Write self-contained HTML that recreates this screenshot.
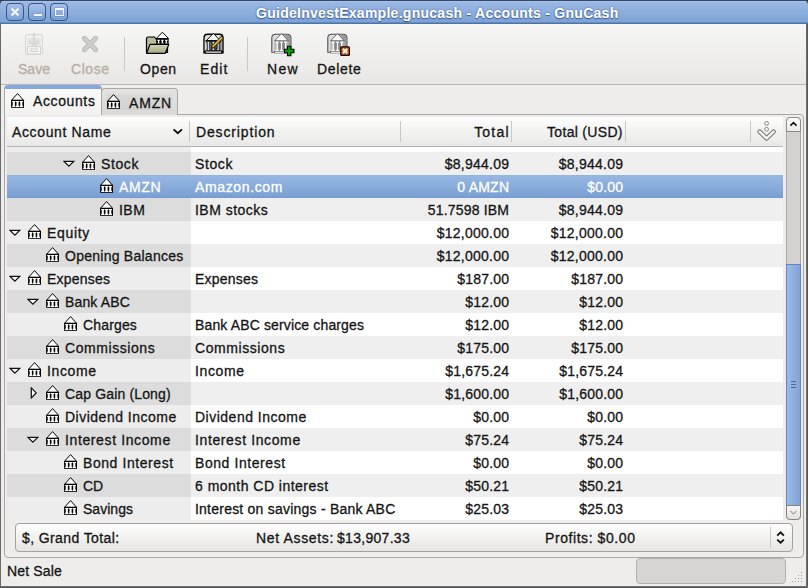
<!DOCTYPE html>
<html><head><meta charset="utf-8"><style>
*{margin:0;padding:0;box-sizing:border-box}
html,body{width:808px;height:588px;overflow:hidden}
body{position:relative;background:#eeedeb;font-family:"Liberation Sans",sans-serif;font-size:14px;color:#151515;-webkit-text-stroke:0.3px currentColor}
div,svg,span{position:absolute}
#title{left:0;top:0;width:808px;height:24px;border-radius:5px 5px 0 0;
 background:linear-gradient(#34496a 0,#34496a 1px,#b4ccee 1px,#9bb9e4 2px,#7ea3d6 22px,#4d74a8 23px,#4d74a8 24px)}
#title .tt{color:#fff;font-weight:bold;font-size:14px;line-height:18px;white-space:nowrap;-webkit-text-stroke:0.1px #fff;
 text-shadow:0 0 2px #3d5f95,0 1px 1px #3d5f95}
.wb{width:18px;height:18px;top:3px;border:1px solid #3b5584;border-radius:4px;background:linear-gradient(#a4c0e8,#7aa0d5)}
#frameL{left:0;top:24px;width:1px;height:564px;background:#6a6a6a}
#frameR{right:0;top:24px;width:2px;height:564px;background:linear-gradient(90deg,#7a7a7a,#4e4e4e)}
#frameB{left:0;bottom:0;width:808px;height:2px;background:linear-gradient(#7a7a7a,#4a4a4a)}
#toolbar{left:1px;top:24px;width:805px;height:61px;background:linear-gradient(#f6f6f5,#e8e7e5);border-bottom:1px solid #b9b8b6}
.tl{font-size:14px;line-height:18px;color:#151515;white-space:nowrap}
.tl.dis{color:#b7ada3}
.sep{width:1px;background:#c9c8c6;top:37px;height:34px}
#nb{left:4px;top:114px;width:800px;height:444px;border:1px solid #a9a8a6;border-radius:0 4px 4px 4px;background:#eeedeb}
.tab{height:30px;border:1px solid #a9a8a6;border-bottom:none;border-radius:4px 4px 0 0}
#tab1{left:4px;top:85px;width:98px;height:30px;background:linear-gradient(#fafafa,#f2f1f0);border-top:4px solid #86a9da}
#tab2{left:101px;top:88px;width:77px;height:27px;background:linear-gradient(#e4e3e1,#d9d8d6)}
#hdr{left:7px;top:117px;width:776px;height:30px;background:linear-gradient(#fdfdfd,#e8e8e7);border-bottom:1px solid #b3b3b3}
.hs{top:4px;width:1px;height:21px;background:#c8c8c8}
.ht{line-height:18px;white-space:nowrap}
.row{left:7px;width:776px;height:23px}
.row.even{background:#fff}
.row.odd{background:#efefef}
.row .c1{left:0;top:0;width:184px;height:23px}
.row.even .c1{background:#ededed}
.row.odd .c1{background:#dcdcdc}
.row.sel{background:linear-gradient(#8fb0df 0,#97b7e3 1px,#7aa0d3 22px,#6f97cf 23px)}
.t{line-height:23px;white-space:nowrap;padding-top:1px}
.tb{line-height:22px}
.t.w{color:#fff}
.bk{}
#sb{left:786px;top:117px;width:15px;height:403px;background:#d3d2d0;border:1px solid #a9a8a6;border-radius:4px}
#sbup{left:786px;top:117px;width:15px;height:15px;background:linear-gradient(#fdfdfd,#ececeb);border:1px solid #8e8d8b;border-radius:4px 4px 0 0}
#sbdn{left:786px;top:505px;width:15px;height:15px;background:linear-gradient(#f6f6f6,#e2e2e1);border:1px solid #858483;border-radius:0 0 4px 4px}
#thumb{left:786px;top:264px;width:15px;height:242px;background:linear-gradient(90deg,#9dbbe6,#7ea4d7);border:1px solid #5d86c2}
#combo{left:15px;top:523px;width:778px;height:29px;border:1px solid #a3a2a0;border-radius:4px;background:linear-gradient(#fefefe,#e6e5e3)}
#prog{left:636px;top:558px;width:150px;height:26px;border:1px solid #b2b1af;border-radius:4px;background:#d6d5d3}
</style></head><body>
<div style="left:0;top:0;width:808px;height:6px;background:#3a3a3a"></div>
<div id="title"><div class="tt" style="left:256px;top:4px;letter-spacing:0.275px">GuideInvestExample.gnucash - Accounts - GnuCash</div></div>
<div class="wb" style="left:6px"><svg style="left:3px;top:3px" width="10" height="10" viewBox="0 0 10 10"><path d="M1.5 1.5L8.5 8.5M8.5 1.5L1.5 8.5" stroke="#f4f7fc" stroke-width="2.1"/></svg></div>
<div class="wb" style="left:28px"><div style="left:4.5px;top:10px;width:8px;height:2px;background:#f4f7fc;box-shadow:0 0 1px #3b5584"></div></div>
<div class="wb" style="left:50px"><div style="left:4px;top:4px;width:8.5px;height:8px;border:1.5px solid #f4f7fc;border-top-width:2.5px;box-shadow:0 0 1px #3b5584"></div></div>
<div id="toolbar"></div>
<div class="sep" style="left:124px"></div>
<div class="sep" style="left:247px"></div>
<svg style="left:18px;top:28px" width="32" height="32" viewBox="0 0 32 32"><rect x="7.5" y="6.5" width="17" height="20" rx="2" fill="#f0f0ef" stroke="#d6d6d5" stroke-width="1"/><rect x="9.5" y="10" width="13" height="7" fill="#e4e4e3"/><rect x="9.5" y="18.5" width="13" height="7.5" fill="#f3f3f2" stroke="#d2d2d1" stroke-width="1"/><rect x="13" y="21" width="6" height="2.5" fill="none" stroke="#d2d2d1" stroke-width="1"/><path d="M16 5V17M11.5 13L16 17.5L20.5 13" stroke="#d6d9d2" stroke-width="2.4" fill="none"/></svg>
<svg style="left:74px;top:28px" width="32" height="32" viewBox="0 0 32 32"><path d="M10.3 10.3L21.7 21.7M21.7 10.3L10.3 21.7" stroke="#b9b9b9" stroke-width="5" stroke-linecap="round"/><path d="M10.3 10.3L21.7 21.7M21.7 10.3L10.3 21.7" stroke="#cdcdcd" stroke-width="3.2" stroke-linecap="round"/></svg>
<svg style="left:142px;top:28px" width="32" height="32" viewBox="0 0 32 32"><defs><linearGradient id="fo" x1="0" y1="0" x2="0" y2="1"><stop offset="0" stop-color="#d3d4b6"/><stop offset="1" stop-color="#a7a985"/></linearGradient></defs><path d="M4.5 24.5V10.5Q4.5 9 6 9H12.5L14 11H25.5V24.5Z" fill="#b9bb99" stroke="#000" stroke-width="1.2"/><path d="M20.4 4.2L14.2 10.6H26.6Z" fill="#fff" stroke="#000" stroke-width="1"/><rect x="14.2" y="10.4" width="12.4" height="6" fill="#000"/><g fill="#fff"><path d="M15.3 11.7h2.6v1h-0.7v2h0.7v0.9h-2.6v-0.9h0.7v-2h-0.7z"/><path d="M19.099999999999998 11.7h2.6v1h-0.7v2h0.7v0.9h-2.6v-0.9h0.7v-2h-0.7z"/><path d="M23.0 11.7h2.6v1h-0.7v2h0.7v0.9h-2.6v-0.9h0.7v-2h-0.7z"/></g><path d="M8 16.4H26.8L23.3 25.3H4.6Z" fill="url(#fo)" stroke="#000" stroke-width="1.2" stroke-linejoin="round"/></svg>
<svg style="left:197px;top:28px" width="32" height="32" viewBox="0 0 32 32"><defs><linearGradient id="eg" x1="0" x2="1"><stop offset="0" stop-color="#e6e6e6"/><stop offset="0.3" stop-color="#6a6a6a"/><stop offset="0.75" stop-color="#3c3c3c"/><stop offset="1" stop-color="#b8b8b8"/></linearGradient></defs><path d="M6.3 25.6V10Q6.3 5.6 10.6 5.6H22.4Q26.7 5.6 26.7 10V25.6Z" fill="#000"/><path d="M7.6 12.6V10.4Q7.6 7 10.8 7H22.2Q25.4 7 25.4 10.4V12.6Z" fill="#dcdcdc"/><rect x="7.6" y="12.6" width="17.8" height="10.2" fill="url(#eg)"/><path d="M16.3 5.4L9.4 12.6H23.2Z" fill="#fafafa" stroke="#000" stroke-width="0.9"/><rect x="8.6" y="12.5" width="15.8" height="1.2" fill="#000"/><g fill="#fff" stroke="#000" stroke-width="0.7"><path d="M9.7 13.6h3.6v1.2h-0.9v6.6h0.9v1.2h-3.6v-1.2h0.9v-6.6h-0.9z"/><path d="M14.5 13.6h3.6v1.2h-0.9v6.6h0.9v1.2h-3.6v-1.2h0.9v-6.6h-0.9z"/><path d="M19.3 13.6h3.6v1.2h-0.9v6.6h0.9v1.2h-3.6v-1.2h0.9v-6.6h-0.9z"/></g><rect x="7.6" y="22.7" width="17.8" height="2.9" fill="#000"/><rect x="8.8" y="23.5" width="15.4" height="1.2" fill="#fff"/><path d="M15.6 18.8L24.8 9.6" stroke="#222" stroke-width="3.2" stroke-linecap="round"/><path d="M16 18.4L24.6 9.8" stroke="#f0c020" stroke-width="1.7" stroke-linecap="round"/></svg>
<svg style="left:266px;top:28px" width="32" height="32" viewBox="0 0 32 32"><defs><linearGradient id="gb266" x1="0" x2="1"><stop offset="0" stop-color="#c9c9c9"/><stop offset="0.5" stop-color="#6e6e6e"/><stop offset="1" stop-color="#b5b5b5"/></linearGradient></defs><path d="M5.8 24.3V10Q5.8 6.2 9.6 6.2H21.1Q24.9 6.2 24.9 10V24.3Z" fill="#dedede" stroke="#4e4e4e" stroke-width="1.1"/><path d="M22 12.8L18 6.7H21.1Q24.4 6.7 24.4 10V24H22Z" fill="#9a9a9a"/><rect x="8" y="13" width="14.5" height="10" fill="url(#gb266)"/><path d="M15.5 5.6L8.6 12.8H22.3Z" fill="#fbfbfb" stroke="#555" stroke-width="0.9"/><g fill="#fafafa"><path d="M9.700000000000001 13.6h3.2v1.2h-0.9v7h0.9v1.2h-3.2v-1.2h0.9v-7h-0.9z"/><path d="M13.9 13.6h3.2v1.2h-0.9v7h0.9v1.2h-3.2v-1.2h0.9v-7h-0.9z"/><path d="M18.099999999999998 13.6h3.2v1.2h-0.9v7h0.9v1.2h-3.2v-1.2h0.9v-7h-0.9z"/></g><rect x="8.5" y="23.5" width="13.5" height="1.6" fill="#fff" stroke="#666" stroke-width="0.6"/><path d="M21.5 18.3h3.4v3h3v3.4h-3v3h-3.4v-3h-3v-3.4h3z" fill="#00a400" stroke="#000" stroke-width="1.1"/></svg>
<svg style="left:322px;top:28px" width="32" height="32" viewBox="0 0 32 32"><defs><linearGradient id="gb322" x1="0" x2="1"><stop offset="0" stop-color="#c9c9c9"/><stop offset="0.5" stop-color="#6e6e6e"/><stop offset="1" stop-color="#b5b5b5"/></linearGradient></defs><path d="M5.8 24.3V10Q5.8 6.2 9.6 6.2H21.1Q24.9 6.2 24.9 10V24.3Z" fill="#dedede" stroke="#4e4e4e" stroke-width="1.1"/><path d="M22 12.8L18 6.7H21.1Q24.4 6.7 24.4 10V24H22Z" fill="#9a9a9a"/><rect x="8" y="13" width="14.5" height="10" fill="url(#gb322)"/><path d="M15.5 5.6L8.6 12.8H22.3Z" fill="#fbfbfb" stroke="#555" stroke-width="0.9"/><g fill="#fafafa"><path d="M9.700000000000001 13.6h3.2v1.2h-0.9v7h0.9v1.2h-3.2v-1.2h0.9v-7h-0.9z"/><path d="M13.9 13.6h3.2v1.2h-0.9v7h0.9v1.2h-3.2v-1.2h0.9v-7h-0.9z"/><path d="M18.099999999999998 13.6h3.2v1.2h-0.9v7h0.9v1.2h-3.2v-1.2h0.9v-7h-0.9z"/></g><rect x="8.5" y="23.5" width="13.5" height="1.6" fill="#fff" stroke="#666" stroke-width="0.6"/><rect x="18.8" y="18.8" width="8.6" height="8.6" rx="1" fill="#e05a1c" stroke="#000" stroke-width="1.2"/><path d="M21 21L25.2 25.2M25.2 21L21 25.2" stroke="#fff" stroke-width="1.8"/></svg>
<div class="tl dis" style="left:18px;top:60px;letter-spacing:0.020px">Save</div>
<div class="tl dis" style="left:71px;top:60px;letter-spacing:0.541px">Close</div>
<div class="tl" style="left:140px;top:60px;letter-spacing:0.613px">Open</div>
<div class="tl" style="left:200px;top:60px;letter-spacing:1.094px">Edit</div>
<div class="tl" style="left:267px;top:60px;letter-spacing:1.328px">New</div>
<div class="tl" style="left:317px;top:60px;letter-spacing:0.672px">Delete</div>
<div id="nb"></div>
<div id="tab2" class="tab"></div>
<div id="tab1" class="tab"></div>
<svg class="bk" style="left:11px;top:92px" width="14" height="16" viewBox="0 0 14 16"><path d="M6.55 1.6L0.6 8.2H12.5Z" fill="#fff" stroke="#000" stroke-width="1" stroke-linejoin="round"/><rect x="0.1" y="8" width="12.9" height="7.8" fill="#000"/><g fill="#fff"><path d="M1.15 8.9h3.3v1.1h-0.6v3.8h0.6v1.1h-3.3v-1.1h0.6v-3.8h-0.6z"/><path d="M4.90 8.9h3.3v1.1h-0.6v3.8h0.6v1.1h-3.3v-1.1h0.6v-3.8h-0.6z"/><path d="M8.65 8.9h3.3v1.1h-0.6v3.8h0.6v1.1h-3.3v-1.1h0.6v-3.8h-0.6z"/></g></svg>
<div class="t tb" style="left:33px;top:89px;letter-spacing:0.613px">Accounts</div>
<svg class="bk" style="left:107px;top:93px" width="14" height="16" viewBox="0 0 14 16"><path d="M6.55 1.6L0.6 8.2H12.5Z" fill="#fff" stroke="#000" stroke-width="1" stroke-linejoin="round"/><rect x="0.1" y="8" width="12.9" height="7.8" fill="#000"/><g fill="#fff"><path d="M1.15 8.9h3.3v1.1h-0.6v3.8h0.6v1.1h-3.3v-1.1h0.6v-3.8h-0.6z"/><path d="M4.90 8.9h3.3v1.1h-0.6v3.8h0.6v1.1h-3.3v-1.1h0.6v-3.8h-0.6z"/><path d="M8.65 8.9h3.3v1.1h-0.6v3.8h0.6v1.1h-3.3v-1.1h0.6v-3.8h-0.6z"/></g></svg>
<div style="left:106px;top:94px;width:66px;height:16px;background:rgba(0,0,0,0.035)"></div><div class="t tb" style="left:129px;top:91px;letter-spacing:0.832px">AMZN</div>
<div id="hdr">
 <div class="ht" style="left:5px;top:6px;letter-spacing:0.639px">Account Name</div>
 <svg style="left:165px;top:10px" width="12" height="8" viewBox="0 0 12 8"><path d="M1.6 2.4L5.8 6.3L10 2.4" stroke="#111" stroke-width="1.9" fill="none"/></svg>
 <div class="hs" style="left:182px"></div>
 <div class="ht" style="left:189px;top:6px;letter-spacing:0.861px">Description</div>
 <div class="hs" style="left:392.5px"></div>
 <div class="ht" style="right:273.32px;top:6px;letter-spacing:1.184px">Total</div>
 <div class="hs" style="left:504px"></div>
 <div class="ht" style="right:160.19px;top:6px;letter-spacing:0.313px">Total (USD)</div>
 <div class="hs" style="left:618px"></div>
 <div class="hs" style="left:743px"></div>
</div>
<div class="row even" style="top:147px;height:5px"><div class="c1" style="height:5px"></div></div>
<div class="row odd" style="top:152px"><div class="c1"></div></div>
<svg class="ex" style="left:62.5px;top:159.5px" width="12" height="8" viewBox="0 0 12 8"><path d="M0.9 1.3H10.9L5.9 6.2Z" fill="#fff" stroke="#111" stroke-width="1.25" stroke-linejoin="miter"/></svg>
<svg class="bk" style="left:82px;top:154px" width="14" height="16" viewBox="0 0 14 16"><path d="M6.55 1.6L0.6 8.2H12.5Z" fill="#fff" stroke="#000" stroke-width="1" stroke-linejoin="round"/><rect x="0.1" y="8" width="12.9" height="7.8" fill="#000"/><g fill="#fff"><path d="M1.15 8.9h3.3v1.1h-0.6v3.8h0.6v1.1h-3.3v-1.1h0.6v-3.8h-0.6z"/><path d="M4.90 8.9h3.3v1.1h-0.6v3.8h0.6v1.1h-3.3v-1.1h0.6v-3.8h-0.6z"/><path d="M8.65 8.9h3.3v1.1h-0.6v3.8h0.6v1.1h-3.3v-1.1h0.6v-3.8h-0.6z"/></g></svg>
<div class="t" style="left:101px;top:152px;letter-spacing:0.597px">Stock</div>
<div class="t" style="left:195px;top:152px;letter-spacing:0.597px">Stock</div>
<div class="t r" style="right:298.76px;top:152px;letter-spacing:0.245px">$8,944.09</div>
<div class="t r" style="right:184.76px;top:152px;letter-spacing:0.245px">$8,944.09</div>
<div class="row sel" style="top:175px"></div>
<svg class="bk" style="left:100px;top:177px" width="14" height="16" viewBox="0 0 14 16"><path d="M6.55 1.6L0.6 8.2H12.5Z" fill="#fff" stroke="#000" stroke-width="1" stroke-linejoin="round"/><rect x="0.1" y="8" width="12.9" height="7.8" fill="#000"/><g fill="#fff"><path d="M1.15 8.9h3.3v1.1h-0.6v3.8h0.6v1.1h-3.3v-1.1h0.6v-3.8h-0.6z"/><path d="M4.90 8.9h3.3v1.1h-0.6v3.8h0.6v1.1h-3.3v-1.1h0.6v-3.8h-0.6z"/><path d="M8.65 8.9h3.3v1.1h-0.6v3.8h0.6v1.1h-3.3v-1.1h0.6v-3.8h-0.6z"/></g></svg>
<div class="t w" style="left:119px;top:175px;letter-spacing:0.657px">AMZN</div>
<div class="t w" style="left:195px;top:175px;letter-spacing:0.640px">Amazon.com</div>
<div class="t r w" style="right:298.76px;top:175px;letter-spacing:0.237px">0 AMZN</div>
<div class="t r w" style="right:184.81px;top:175px;letter-spacing:0.191px">$0.00</div>
<div class="row odd" style="top:198px"><div class="c1"></div></div>
<svg class="bk" style="left:100px;top:200px" width="14" height="16" viewBox="0 0 14 16"><path d="M6.55 1.6L0.6 8.2H12.5Z" fill="#fff" stroke="#000" stroke-width="1" stroke-linejoin="round"/><rect x="0.1" y="8" width="12.9" height="7.8" fill="#000"/><g fill="#fff"><path d="M1.15 8.9h3.3v1.1h-0.6v3.8h0.6v1.1h-3.3v-1.1h0.6v-3.8h-0.6z"/><path d="M4.90 8.9h3.3v1.1h-0.6v3.8h0.6v1.1h-3.3v-1.1h0.6v-3.8h-0.6z"/><path d="M8.65 8.9h3.3v1.1h-0.6v3.8h0.6v1.1h-3.3v-1.1h0.6v-3.8h-0.6z"/></g></svg>
<div class="t" style="left:119px;top:198px;letter-spacing:0.470px">IBM</div>
<div class="t" style="left:195px;top:198px;letter-spacing:0.483px">IBM stocks</div>
<div class="t r" style="right:298.81px;top:198px;letter-spacing:0.192px">51.7598 IBM</div>
<div class="t r" style="right:184.76px;top:198px;letter-spacing:0.245px">$8,944.09</div>
<div class="row even" style="top:221px"><div class="c1"></div></div>
<svg class="ex" style="left:8.5px;top:228.5px" width="12" height="8" viewBox="0 0 12 8"><path d="M0.9 1.3H10.9L5.9 6.2Z" fill="#fff" stroke="#111" stroke-width="1.25" stroke-linejoin="miter"/></svg>
<svg class="bk" style="left:28px;top:223px" width="14" height="16" viewBox="0 0 14 16"><path d="M6.55 1.6L0.6 8.2H12.5Z" fill="#fff" stroke="#000" stroke-width="1" stroke-linejoin="round"/><rect x="0.1" y="8" width="12.9" height="7.8" fill="#000"/><g fill="#fff"><path d="M1.15 8.9h3.3v1.1h-0.6v3.8h0.6v1.1h-3.3v-1.1h0.6v-3.8h-0.6z"/><path d="M4.90 8.9h3.3v1.1h-0.6v3.8h0.6v1.1h-3.3v-1.1h0.6v-3.8h-0.6z"/><path d="M8.65 8.9h3.3v1.1h-0.6v3.8h0.6v1.1h-3.3v-1.1h0.6v-3.8h-0.6z"/></g></svg>
<div class="t" style="left:47px;top:221px;letter-spacing:0.663px">Equity</div>
<div class="t r" style="right:298.76px;top:221px;letter-spacing:0.242px">$12,000.00</div>
<div class="t r" style="right:184.76px;top:221px;letter-spacing:0.242px">$12,000.00</div>
<div class="row odd" style="top:244px"><div class="c1"></div></div>
<svg class="bk" style="left:46px;top:246px" width="14" height="16" viewBox="0 0 14 16"><path d="M6.55 1.6L0.6 8.2H12.5Z" fill="#fff" stroke="#000" stroke-width="1" stroke-linejoin="round"/><rect x="0.1" y="8" width="12.9" height="7.8" fill="#000"/><g fill="#fff"><path d="M1.15 8.9h3.3v1.1h-0.6v3.8h0.6v1.1h-3.3v-1.1h0.6v-3.8h-0.6z"/><path d="M4.90 8.9h3.3v1.1h-0.6v3.8h0.6v1.1h-3.3v-1.1h0.6v-3.8h-0.6z"/><path d="M8.65 8.9h3.3v1.1h-0.6v3.8h0.6v1.1h-3.3v-1.1h0.6v-3.8h-0.6z"/></g></svg>
<div class="t" style="left:65px;top:244px;letter-spacing:0.255px">Opening Balances</div>
<div class="t r" style="right:298.76px;top:244px;letter-spacing:0.242px">$12,000.00</div>
<div class="t r" style="right:184.76px;top:244px;letter-spacing:0.242px">$12,000.00</div>
<div class="row even" style="top:267px"><div class="c1"></div></div>
<svg class="ex" style="left:8.5px;top:274.5px" width="12" height="8" viewBox="0 0 12 8"><path d="M0.9 1.3H10.9L5.9 6.2Z" fill="#fff" stroke="#111" stroke-width="1.25" stroke-linejoin="miter"/></svg>
<svg class="bk" style="left:28px;top:269px" width="14" height="16" viewBox="0 0 14 16"><path d="M6.55 1.6L0.6 8.2H12.5Z" fill="#fff" stroke="#000" stroke-width="1" stroke-linejoin="round"/><rect x="0.1" y="8" width="12.9" height="7.8" fill="#000"/><g fill="#fff"><path d="M1.15 8.9h3.3v1.1h-0.6v3.8h0.6v1.1h-3.3v-1.1h0.6v-3.8h-0.6z"/><path d="M4.90 8.9h3.3v1.1h-0.6v3.8h0.6v1.1h-3.3v-1.1h0.6v-3.8h-0.6z"/><path d="M8.65 8.9h3.3v1.1h-0.6v3.8h0.6v1.1h-3.3v-1.1h0.6v-3.8h-0.6z"/></g></svg>
<div class="t" style="left:47px;top:267px;letter-spacing:0.227px">Expenses</div>
<div class="t" style="left:195px;top:267px;letter-spacing:0.227px">Expenses</div>
<div class="t r" style="right:298.80px;top:267px;letter-spacing:0.199px">$187.00</div>
<div class="t r" style="right:184.80px;top:267px;letter-spacing:0.199px">$187.00</div>
<div class="row odd" style="top:290px"><div class="c1"></div></div>
<svg class="ex" style="left:26.5px;top:297.5px" width="12" height="8" viewBox="0 0 12 8"><path d="M0.9 1.3H10.9L5.9 6.2Z" fill="#fff" stroke="#111" stroke-width="1.25" stroke-linejoin="miter"/></svg>
<svg class="bk" style="left:46px;top:292px" width="14" height="16" viewBox="0 0 14 16"><path d="M6.55 1.6L0.6 8.2H12.5Z" fill="#fff" stroke="#000" stroke-width="1" stroke-linejoin="round"/><rect x="0.1" y="8" width="12.9" height="7.8" fill="#000"/><g fill="#fff"><path d="M1.15 8.9h3.3v1.1h-0.6v3.8h0.6v1.1h-3.3v-1.1h0.6v-3.8h-0.6z"/><path d="M4.90 8.9h3.3v1.1h-0.6v3.8h0.6v1.1h-3.3v-1.1h0.6v-3.8h-0.6z"/><path d="M8.65 8.9h3.3v1.1h-0.6v3.8h0.6v1.1h-3.3v-1.1h0.6v-3.8h-0.6z"/></g></svg>
<div class="t" style="left:65px;top:290px;letter-spacing:0.134px">Bank ABC</div>
<div class="t r" style="right:298.80px;top:290px;letter-spacing:0.195px">$12.00</div>
<div class="t r" style="right:184.80px;top:290px;letter-spacing:0.195px">$12.00</div>
<div class="row even" style="top:313px"><div class="c1"></div></div>
<svg class="bk" style="left:64px;top:315px" width="14" height="16" viewBox="0 0 14 16"><path d="M6.55 1.6L0.6 8.2H12.5Z" fill="#fff" stroke="#000" stroke-width="1" stroke-linejoin="round"/><rect x="0.1" y="8" width="12.9" height="7.8" fill="#000"/><g fill="#fff"><path d="M1.15 8.9h3.3v1.1h-0.6v3.8h0.6v1.1h-3.3v-1.1h0.6v-3.8h-0.6z"/><path d="M4.90 8.9h3.3v1.1h-0.6v3.8h0.6v1.1h-3.3v-1.1h0.6v-3.8h-0.6z"/><path d="M8.65 8.9h3.3v1.1h-0.6v3.8h0.6v1.1h-3.3v-1.1h0.6v-3.8h-0.6z"/></g></svg>
<div class="t" style="left:83px;top:313px;letter-spacing:0.154px">Charges</div>
<div class="t" style="left:195px;top:313px;letter-spacing:0.140px">Bank ABC service charges</div>
<div class="t r" style="right:298.80px;top:313px;letter-spacing:0.195px">$12.00</div>
<div class="t r" style="right:184.80px;top:313px;letter-spacing:0.195px">$12.00</div>
<div class="row odd" style="top:336px"><div class="c1"></div></div>
<svg class="bk" style="left:46px;top:338px" width="14" height="16" viewBox="0 0 14 16"><path d="M6.55 1.6L0.6 8.2H12.5Z" fill="#fff" stroke="#000" stroke-width="1" stroke-linejoin="round"/><rect x="0.1" y="8" width="12.9" height="7.8" fill="#000"/><g fill="#fff"><path d="M1.15 8.9h3.3v1.1h-0.6v3.8h0.6v1.1h-3.3v-1.1h0.6v-3.8h-0.6z"/><path d="M4.90 8.9h3.3v1.1h-0.6v3.8h0.6v1.1h-3.3v-1.1h0.6v-3.8h-0.6z"/><path d="M8.65 8.9h3.3v1.1h-0.6v3.8h0.6v1.1h-3.3v-1.1h0.6v-3.8h-0.6z"/></g></svg>
<div class="t" style="left:65px;top:336px;letter-spacing:0.571px">Commissions</div>
<div class="t" style="left:195px;top:336px;letter-spacing:0.571px">Commissions</div>
<div class="t r" style="right:298.80px;top:336px;letter-spacing:0.199px">$175.00</div>
<div class="t r" style="right:184.80px;top:336px;letter-spacing:0.199px">$175.00</div>
<div class="row even" style="top:359px"><div class="c1"></div></div>
<svg class="ex" style="left:8.5px;top:366.5px" width="12" height="8" viewBox="0 0 12 8"><path d="M0.9 1.3H10.9L5.9 6.2Z" fill="#fff" stroke="#111" stroke-width="1.25" stroke-linejoin="miter"/></svg>
<svg class="bk" style="left:28px;top:361px" width="14" height="16" viewBox="0 0 14 16"><path d="M6.55 1.6L0.6 8.2H12.5Z" fill="#fff" stroke="#000" stroke-width="1" stroke-linejoin="round"/><rect x="0.1" y="8" width="12.9" height="7.8" fill="#000"/><g fill="#fff"><path d="M1.15 8.9h3.3v1.1h-0.6v3.8h0.6v1.1h-3.3v-1.1h0.6v-3.8h-0.6z"/><path d="M4.90 8.9h3.3v1.1h-0.6v3.8h0.6v1.1h-3.3v-1.1h0.6v-3.8h-0.6z"/><path d="M8.65 8.9h3.3v1.1h-0.6v3.8h0.6v1.1h-3.3v-1.1h0.6v-3.8h-0.6z"/></g></svg>
<div class="t" style="left:47px;top:359px;letter-spacing:0.630px">Income</div>
<div class="t" style="left:195px;top:359px;letter-spacing:0.630px">Income</div>
<div class="t r" style="right:298.81px;top:359px;letter-spacing:0.189px">$1,675.24</div>
<div class="t r" style="right:184.81px;top:359px;letter-spacing:0.189px">$1,675.24</div>
<div class="row odd" style="top:382px"><div class="c1"></div></div>
<svg class="ex" style="left:29.5px;top:386.5px" width="8" height="12" viewBox="0 0 8 12"><path d="M1.3 0.9V10.9L6.2 5.9Z" fill="#fff" stroke="#111" stroke-width="1.25"/></svg>
<svg class="bk" style="left:46px;top:384px" width="14" height="16" viewBox="0 0 14 16"><path d="M6.55 1.6L0.6 8.2H12.5Z" fill="#fff" stroke="#000" stroke-width="1" stroke-linejoin="round"/><rect x="0.1" y="8" width="12.9" height="7.8" fill="#000"/><g fill="#fff"><path d="M1.15 8.9h3.3v1.1h-0.6v3.8h0.6v1.1h-3.3v-1.1h0.6v-3.8h-0.6z"/><path d="M4.90 8.9h3.3v1.1h-0.6v3.8h0.6v1.1h-3.3v-1.1h0.6v-3.8h-0.6z"/><path d="M8.65 8.9h3.3v1.1h-0.6v3.8h0.6v1.1h-3.3v-1.1h0.6v-3.8h-0.6z"/></g></svg>
<div class="t" style="left:65px;top:382px;letter-spacing:0.152px">Cap Gain (Long)</div>
<div class="t r" style="right:298.81px;top:382px;letter-spacing:0.189px">$1,600.00</div>
<div class="t r" style="right:184.81px;top:382px;letter-spacing:0.189px">$1,600.00</div>
<div class="row even" style="top:405px"><div class="c1"></div></div>
<svg class="bk" style="left:46px;top:407px" width="14" height="16" viewBox="0 0 14 16"><path d="M6.55 1.6L0.6 8.2H12.5Z" fill="#fff" stroke="#000" stroke-width="1" stroke-linejoin="round"/><rect x="0.1" y="8" width="12.9" height="7.8" fill="#000"/><g fill="#fff"><path d="M1.15 8.9h3.3v1.1h-0.6v3.8h0.6v1.1h-3.3v-1.1h0.6v-3.8h-0.6z"/><path d="M4.90 8.9h3.3v1.1h-0.6v3.8h0.6v1.1h-3.3v-1.1h0.6v-3.8h-0.6z"/><path d="M8.65 8.9h3.3v1.1h-0.6v3.8h0.6v1.1h-3.3v-1.1h0.6v-3.8h-0.6z"/></g></svg>
<div class="t" style="left:65px;top:405px;letter-spacing:0.501px">Dividend Income</div>
<div class="t" style="left:195px;top:405px;letter-spacing:0.501px">Dividend Income</div>
<div class="t r" style="right:298.81px;top:405px;letter-spacing:0.191px">$0.00</div>
<div class="t r" style="right:184.81px;top:405px;letter-spacing:0.191px">$0.00</div>
<div class="row odd" style="top:428px"><div class="c1"></div></div>
<svg class="ex" style="left:26.5px;top:435.5px" width="12" height="8" viewBox="0 0 12 8"><path d="M0.9 1.3H10.9L5.9 6.2Z" fill="#fff" stroke="#111" stroke-width="1.25" stroke-linejoin="miter"/></svg>
<svg class="bk" style="left:46px;top:430px" width="14" height="16" viewBox="0 0 14 16"><path d="M6.55 1.6L0.6 8.2H12.5Z" fill="#fff" stroke="#000" stroke-width="1" stroke-linejoin="round"/><rect x="0.1" y="8" width="12.9" height="7.8" fill="#000"/><g fill="#fff"><path d="M1.15 8.9h3.3v1.1h-0.6v3.8h0.6v1.1h-3.3v-1.1h0.6v-3.8h-0.6z"/><path d="M4.90 8.9h3.3v1.1h-0.6v3.8h0.6v1.1h-3.3v-1.1h0.6v-3.8h-0.6z"/><path d="M8.65 8.9h3.3v1.1h-0.6v3.8h0.6v1.1h-3.3v-1.1h0.6v-3.8h-0.6z"/></g></svg>
<div class="t" style="left:65px;top:428px;letter-spacing:0.620px">Interest Income</div>
<div class="t" style="left:195px;top:428px;letter-spacing:0.620px">Interest Income</div>
<div class="t r" style="right:298.80px;top:428px;letter-spacing:0.195px">$75.24</div>
<div class="t r" style="right:184.80px;top:428px;letter-spacing:0.195px">$75.24</div>
<div class="row even" style="top:451px"><div class="c1"></div></div>
<svg class="bk" style="left:64px;top:453px" width="14" height="16" viewBox="0 0 14 16"><path d="M6.55 1.6L0.6 8.2H12.5Z" fill="#fff" stroke="#000" stroke-width="1" stroke-linejoin="round"/><rect x="0.1" y="8" width="12.9" height="7.8" fill="#000"/><g fill="#fff"><path d="M1.15 8.9h3.3v1.1h-0.6v3.8h0.6v1.1h-3.3v-1.1h0.6v-3.8h-0.6z"/><path d="M4.90 8.9h3.3v1.1h-0.6v3.8h0.6v1.1h-3.3v-1.1h0.6v-3.8h-0.6z"/><path d="M8.65 8.9h3.3v1.1h-0.6v3.8h0.6v1.1h-3.3v-1.1h0.6v-3.8h-0.6z"/></g></svg>
<div class="t" style="left:83px;top:451px;letter-spacing:0.571px">Bond Interest</div>
<div class="t" style="left:195px;top:451px;letter-spacing:0.571px">Bond Interest</div>
<div class="t r" style="right:298.81px;top:451px;letter-spacing:0.191px">$0.00</div>
<div class="t r" style="right:184.81px;top:451px;letter-spacing:0.191px">$0.00</div>
<div class="row odd" style="top:474px"><div class="c1"></div></div>
<svg class="bk" style="left:64px;top:476px" width="14" height="16" viewBox="0 0 14 16"><path d="M6.55 1.6L0.6 8.2H12.5Z" fill="#fff" stroke="#000" stroke-width="1" stroke-linejoin="round"/><rect x="0.1" y="8" width="12.9" height="7.8" fill="#000"/><g fill="#fff"><path d="M1.15 8.9h3.3v1.1h-0.6v3.8h0.6v1.1h-3.3v-1.1h0.6v-3.8h-0.6z"/><path d="M4.90 8.9h3.3v1.1h-0.6v3.8h0.6v1.1h-3.3v-1.1h0.6v-3.8h-0.6z"/><path d="M8.65 8.9h3.3v1.1h-0.6v3.8h0.6v1.1h-3.3v-1.1h0.6v-3.8h-0.6z"/></g></svg>
<div class="t" style="left:83px;top:474px;letter-spacing:-0.117px">CD</div>
<div class="t" style="left:195px;top:474px;letter-spacing:0.479px">6 month CD interest</div>
<div class="t r" style="right:298.80px;top:474px;letter-spacing:0.195px">$50.21</div>
<div class="t r" style="right:184.80px;top:474px;letter-spacing:0.195px">$50.21</div>
<div class="row even" style="top:497px"><div class="c1"></div></div>
<svg class="bk" style="left:64px;top:499px" width="14" height="16" viewBox="0 0 14 16"><path d="M6.55 1.6L0.6 8.2H12.5Z" fill="#fff" stroke="#000" stroke-width="1" stroke-linejoin="round"/><rect x="0.1" y="8" width="12.9" height="7.8" fill="#000"/><g fill="#fff"><path d="M1.15 8.9h3.3v1.1h-0.6v3.8h0.6v1.1h-3.3v-1.1h0.6v-3.8h-0.6z"/><path d="M4.90 8.9h3.3v1.1h-0.6v3.8h0.6v1.1h-3.3v-1.1h0.6v-3.8h-0.6z"/><path d="M8.65 8.9h3.3v1.1h-0.6v3.8h0.6v1.1h-3.3v-1.1h0.6v-3.8h-0.6z"/></g></svg>
<div class="t" style="left:83px;top:497px;letter-spacing:0.027px">Savings</div>
<div class="t" style="left:195px;top:497px;letter-spacing:0.224px">Interest on savings - Bank ABC</div>
<div class="t r" style="right:298.80px;top:497px;letter-spacing:0.195px">$25.03</div>
<div class="t r" style="right:184.80px;top:497px;letter-spacing:0.195px">$25.03</div>
<div id="sb"></div>
<div id="thumb"></div>
<div id="sbup"></div>
<div id="sbdn"></div>
<svg style="left:788px;top:120px" width="11" height="8" viewBox="0 0 11 8"><path d="M2.4 5.6L5.5 2.6L8.6 5.6" stroke="#111" stroke-width="1.5" fill="none"/></svg>
<svg style="left:788px;top:508px" width="11" height="8" viewBox="0 0 11 8"><path d="M2.3 2.8L5.5 6L8.7 2.8" stroke="#a5a5a5" stroke-width="1.2" fill="none"/></svg>
<div style="left:791px;top:381px;width:5px;height:1px;background:#4a6a95"></div>
<div style="left:791px;top:384px;width:5px;height:1px;background:#4a6a95"></div>
<div style="left:791px;top:387px;width:5px;height:1px;background:#4a6a95"></div>
<svg style="left:755px;top:119px" width="24" height="25" viewBox="0 0 24 25"><circle cx="11.6" cy="4.4" r="1.9" fill="#fafafa" stroke="#7a7a7a" stroke-width="0.9"/><circle cx="11.6" cy="10.3" r="1.9" fill="#fafafa" stroke="#7a7a7a" stroke-width="0.9"/><path d="M4.6 12.6L11.6 19.4L18.6 12.6" stroke="#707070" stroke-width="4.4" stroke-linecap="round" stroke-linejoin="round" fill="none"/><path d="M4.6 12.6L11.6 19.4L18.6 12.6" stroke="#f2f2f2" stroke-width="2.6" stroke-linecap="round" stroke-linejoin="round" fill="none"/></svg>
<div id="combo">
 <div class="t" style="left:6px;top:2px;letter-spacing:0.395px">$, Grand Total:</div>
 <div class="t" style="left:240px;top:2px;letter-spacing:0.653px">Net Assets:</div><div class="t" style="left:321px;top:2px;letter-spacing:0.292px">$13,907.33</div>
 <div class="t" style="left:529px;top:2px;letter-spacing:0.571px">Profits: $0.00</div>
 <div style="left:754px;top:3px;width:1px;height:21px;background:#c8c8c8"></div>
 <svg style="left:759px;top:6px" width="12" height="16" viewBox="0 0 12 16"><path d="M2.2 5.6L5.6 2.3L8.9 5.6M2.2 9.6L5.6 12.7L8.9 9.6" stroke="#111" stroke-width="1.8" fill="none"/></svg>
</div>
<div class="t" style="left:7px;top:559px;letter-spacing:0.162px">Net Sale</div>
<div id="prog"></div>
<div style="left:801px;top:572px;width:1px;height:1px;background:#a0a0a0"></div><div style="left:798px;top:575px;width:1px;height:1px;background:#a0a0a0"></div><div style="left:801px;top:575px;width:1px;height:1px;background:#a0a0a0"></div><div style="left:795px;top:578px;width:1px;height:1px;background:#a0a0a0"></div><div style="left:798px;top:578px;width:1px;height:1px;background:#a0a0a0"></div><div style="left:801px;top:578px;width:1px;height:1px;background:#a0a0a0"></div><div style="left:792px;top:581px;width:1px;height:1px;background:#a0a0a0"></div><div style="left:795px;top:581px;width:1px;height:1px;background:#a0a0a0"></div><div style="left:798px;top:581px;width:1px;height:1px;background:#a0a0a0"></div><div style="left:801px;top:581px;width:1px;height:1px;background:#a0a0a0"></div>
<div id="frameL"></div><div id="frameR"></div><div id="frameB"></div>
</body></html>
